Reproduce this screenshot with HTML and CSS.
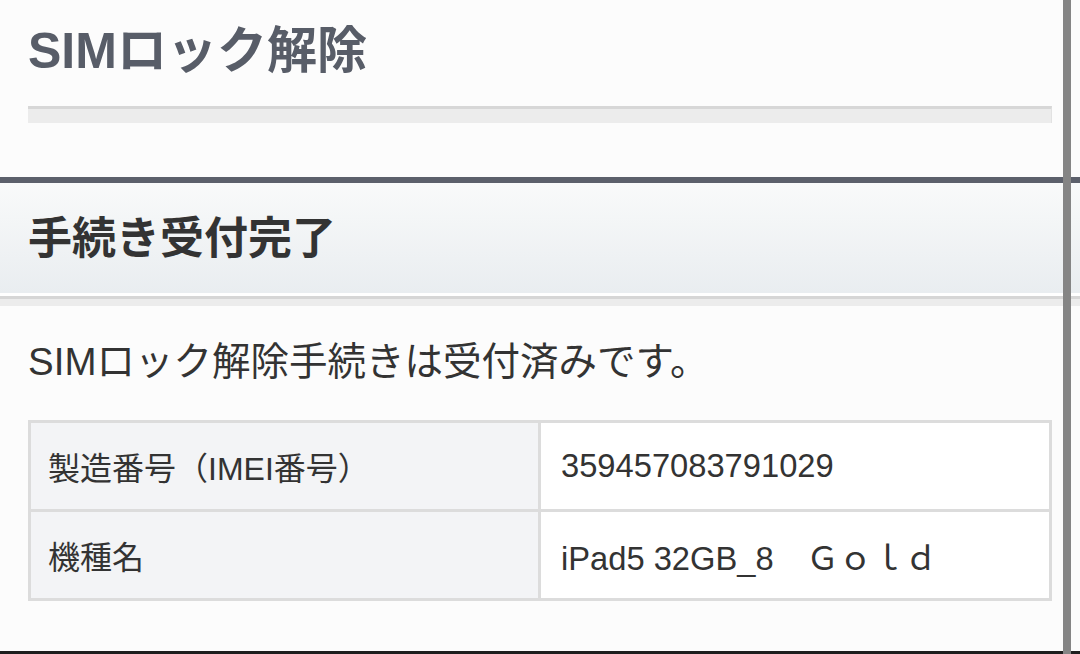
FILE: index.html
```html
<!DOCTYPE html>
<html lang="ja">
<head>
<meta charset="utf-8">
<title>SIMロック解除</title>
<link rel="stylesheet" href="styles.css">
</head>
<body>
<div class="page">
  <header class="page-header">
    <h1 class="page-title">SIMロック解除</h1>
    <div class="title-bar"></div>
  </header>
  <div class="divider"></div>
  <h2 class="section-head">手続き受付完了</h2>
  <div class="head-shadow"></div>
  <main class="content">
    <p class="message">SIMロック解除手続きは受付済みです。</p>
    <table class="info">
      <tr>
        <th class="info-label">製造番号（IMEI番号）</th>
        <td class="info-value">359457083791029</td>
      </tr>
      <tr>
        <th class="info-label">機種名</th>
        <td class="info-value">iPad5 32GB_8　Ｇｏｌｄ</td>
      </tr>
    </table>
  </main>
  <div class="bottom-line"></div>
  <div class="scrollbar"></div>
</div>
</body>
</html>
```
FILE: styles.css
```css
html, body {
  margin: 0;
  padding: 0;
  overflow: hidden;
  background: #fcfcfc;
}
.page {
  position: relative;
  width: 1080px;
  height: 654px;
  font-family: "Liberation Sans", "Noto Sans CJK JP", sans-serif;
  color: #333333;
}
.page-header {
  padding: 0 28px;
}
.page-title {
  margin: 0;
  height: 100px;
  line-height: 102px;
  font-size: 50px;
  font-weight: bold;
  color: #585d68;
}
.title-bar {
  margin-top: 6px;
  height: 14px;
  border-top: 3px solid #d7d7d7;
  border-right: 1px solid #e2e2e2;
  background: #ececec;
}
.divider {
  margin-top: 54px;
  height: 6px;
  background: #5c606b;
}
.section-head {
  margin: 0;
  height: 110px;
  line-height: 112px;
  padding-left: 28px;
  font-size: 44px;
  font-weight: bold;
  color: #333333;
  background: linear-gradient(#f9fafa, #e9edf0);
  border-bottom: 3px solid #ffffff;
}
.head-shadow {
  height: 7px;
  border-top: 3px solid #d6d6d6;
  background: #ececec;
}
.content {
  padding: 0 28px;
}
.message {
  margin: 28px 0 0;
  height: 56px;
  line-height: 56px;
  font-size: 38.5px;
  color: #333333;
}
.info {
  margin-top: 30px;
  width: 1024px;
  border-collapse: separate;
  border-spacing: 3px;
  background: #dcdcdc;
  table-layout: fixed;
}
.info-label,
.info-value {
  height: 86px;
  padding: 0 0 0 17px;
  text-align: left;
  font-weight: normal;
  font-size: 32px;
  color: #333333;
  vertical-align: middle;
}
.info-label {
  width: 490px;
  background: #f3f4f6;
}
.info-value {
  padding-left: 20px;
  font-size: 32.7px;
  background: #ffffff;
}
.bottom-line {
  position: absolute;
  left: 0;
  right: 0;
  bottom: 0;
  height: 3px;
  background: #1e1e1e;
}
.scrollbar {
  position: absolute;
  top: 0;
  left: 1063px;
  width: 8px;
  height: 654px;
  background: #858585;
}
```
